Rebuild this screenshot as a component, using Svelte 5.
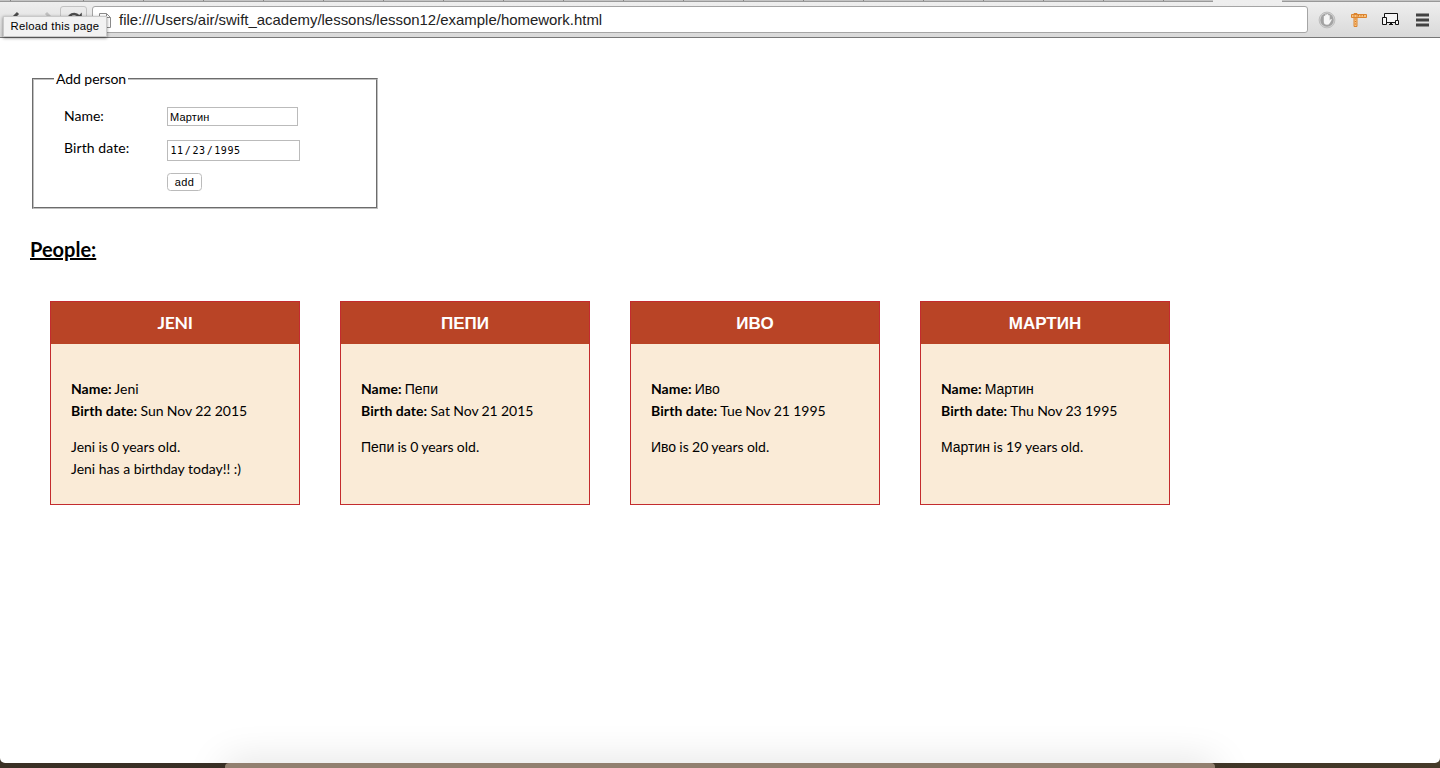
<script>
  const people = [
    { name: 'Jeni', latin: true, date: 'Sun Nov 22 2015', age: 0, birthday: true },
    { name: 'Пепи', date: 'Sat Nov 21 2015', age: 0 },
    { name: 'Иво', date: 'Tue Nov 21 1995', age: 20 },
    { name: 'Мартин', date: 'Thu Nov 23 1995', age: 19 }
  ];
</script>

<div class="window">
  <header class="toolbar">
    <div class="tabs"><i class="strip"></i><i class="active"></i><i class="rest"></i></div>
    <div class="bar">
      <nav class="nav">
        <svg class="back" width="16" height="16" viewBox="0 0 16 16"><path d="M8 2 2 8l6 6M3 8h12" fill="none" stroke="#4b4b4b" stroke-width="3" /></svg>
        <svg class="fwd" width="16" height="16" viewBox="0 0 16 16"><path d="m8 2 6 6-6 6M1 8h12" fill="none" stroke="#c0c0c0" stroke-width="3" /></svg>
        <span class="reload">
          <svg width="20" height="20" viewBox="0 0 20 20"><path d="M15.3 13.2a6 6 0 1 1-.6-7.1" fill="none" stroke="#4b4b4b" stroke-width="2.6" /><path d="M17.8 2.4v6.6h-6.6z" fill="#4b4b4b" /></svg>
        </span>
      </nav>
      <div class="address">
        <svg class="doc" width="12" height="16" viewBox="0 0 12 16"><path d="M.5 1.5h7l4 4v10H.5zM7.5 1.5v4h4" fill="#fff" stroke="#8b8b8b" /></svg>
        <span>file:///Users/air/swift_academy/lessons/lesson12/example/homework.html</span>
      </div>
      <div class="icons">
        <svg width="18" height="18" viewBox="0 0 18 18"><circle cx="9" cy="9" r="7.9" fill="#d6d6d6" stroke="#bdbdbd" /><circle cx="9" cy="9" r="6.7" fill="#a3a3a3" /><path d="M5.8 9V5.2q.8-.9 1.4 0V3.8q.8-.9 1.5 0v-.4q.8-.8 1.5 0v1q.8-.8 1.5 0v5l.9-1.1q1-.5 1.3.3l-2 3.3q-1 1.9-2.9 1.9-3.2 0-3.2-3.2z" fill="#f7f7f7" /></svg>
        <svg width="18" height="18" viewBox="0 0 18 18"><path d="M1.5 3.5h15v3h-15zM4 2.5h3v13H4z" fill="#f8c280" stroke="#db8430" /><path d="M8.5 4v1.5M11 4v1.5M13.5 4v1.5M5 8h1M5 10.5h1M5 13h1" stroke="#d67a22" /></svg>
        <svg width="18" height="18" viewBox="0 0 18 18"><g fill="#f5f5f5" stroke="#111"><path d="M3.5 2.5h13v9h-13z" /><path d="M1.5 6.5h4v7h-4zM14.5 9.5h3v4h-3z" /></g><path d="M8 13.5h4M9 12.5h2" stroke="#111" /></svg>
        <svg class="menu" width="14" height="14" viewBox="0 0 14 14"><path d="M1 2h13M1 7h13M1 12h13" stroke="#424242" stroke-width="3" /></svg>
      </div>
    </div>
    <div class="tooltip">Reload this page</div>
  </header>

  <main>
    <fieldset>
      <legend>Add person</legend>
      <div class="row"><label for="name">Name:</label><input id="name" value="Мартин" /></div>
      <div class="row second"><span class="label wide">Birth date:</span><div class="date"><span>11</span><span>/</span><span>23</span><span>/</span><span>1995</span></div></div>
      <div class="row third"><span class="label"></span><button>add</button></div>
    </fieldset>
    <h2>People:</h2>
    <section class="cards">
      {#each people as p}
        <article>
          <h3 class:cyr={!p.latin}>{p.name.toUpperCase()}</h3>
          <div class="body">
            <p><b>Name:</b> <span class:cyr={!p.latin}>{p.name}</span><br /><b class="wide">Birth date:</b> {p.date}</p>
            <p><span class:cyr={!p.latin}>{p.name}</span> is {p.age} years old.{#if p.birthday}<br /><span class="birthday">{p.name} has a birthday today!! :)</span>{/if}</p>
          </div>
        </article>
      {/each}
    </section>
  </main>
  <div class="dockglow"></div>
</div>
<div class="dock"></div>

<style>
  :global(body) { margin: 0; background: linear-gradient(90deg, #3a3025, #332b23 50%, #453a29); overflow: hidden; }
  :global(#app) { height: 768px; position: relative; }
  .window { height: 763px; background: #fff; border-radius: 0 0 5px 5px; overflow: hidden; position: relative; font: 14px/22px Lato, sans-serif; color: #000; }
  .toolbar { height: 38px; box-sizing: border-box; border-bottom: 1px solid #777; background: linear-gradient(#f0f0f0, #d9d9d9); position: relative; }
  .tabs { display: flex; height: 2px; }
  .tabs i { height: 2px; box-sizing: border-box; border-bottom: 1px solid #999; background: #c4c4c4; }
  .strip { width: 1213px; background: repeating-linear-gradient(90deg, #c4c4c4 0 59px, #858585 59px 60px) 24px 0 !important; }
  .tabs .active { width: 69px; background: #eee; border: 0; }
  .rest { flex: 1; }
  .bar { display: flex; height: 35px; }
  .nav { width: 92px; display: flex; padding: 4px 0 0 8px; box-sizing: border-box; }
  .back { margin: 5px 0 0 2px; }
  .fwd { margin: 5px 0 0 12px; }
  .reload { width: 27px; height: 25px; border: 1px solid #c2c2c2; border-radius: 3px; margin-left: 6px; box-sizing: border-box; display: flex; justify-content: center; padding-top: 3px; }
  .reload svg { flex: none; }
  .address { width: 1216px; height: 27px; margin-top: 4px; box-sizing: border-box; border: 1px solid #a5a5a5; border-radius: 3px; background: #fff; display: flex; align-items: center; padding-left: 6px; font: 14.95px/25px "Liberation Sans", sans-serif; color: #222; }
  .doc { margin-right: 8px; }
  .icons { display: flex; align-items: center; padding: 1px 0 0 10px; gap: 14px; }
  .icons svg:nth-child(3) { margin-left: -1px; }
  .icons .menu { margin-left: 2px; }
  .tooltip { position: absolute; left: 3px; top: 16px; width: 104px; height: 21px; box-sizing: border-box; border: 1px solid #c9c9c9; background: #f2f2f2; box-shadow: 0 1px 3px #0007; font: 11.3px/18px "Liberation Sans", sans-serif; letter-spacing: .25px; text-align: center; white-space: nowrap; }
  main { padding: 30px 30px 0; }
  fieldset { width: 346px; height: 141px; box-sizing: border-box; margin: 0 2px; border: 2px groove #c0c0c0; padding: 15px 20px 0; }
  legend { padding: 0 2px; letter-spacing: -.06px; }
  .row { display: flex; padding-left: 10px; height: 22px; }
  .row label, .label { width: 103px; }
  .wide { letter-spacing: .1px; }
  .second { margin-top: 10px; }
  .third { margin-top: 12px; }
  input { width: 131px; height: 19px; box-sizing: border-box; margin: 2px 0 0; border: 1px solid #bbb; padding: 1px 2px; font: 11px "Liberation Sans", sans-serif; letter-spacing: .15px; color: #000; }
  .date { width: 133px; height: 21px; box-sizing: border-box; margin-top: 3px; border: 1px solid #bbb; padding-left: 2px; font: 10px/19px "DejaVu Sans Mono", monospace; letter-spacing: .6px; display: flex; flex: none; }
  .date span { padding: 0 .5px; }
  button { width: 35px; height: 18px; margin: 2px 0 0; padding: 0; border: 1px solid #bbb; border-radius: 3.5px; background: #fff; font: 11px/15px "Liberation Sans", sans-serif; letter-spacing: .3px; color: #000; }
  h2 { font-size: 20px; line-height: 30px; margin: 25px 0 0; text-decoration: underline; }
  .cards { display: flex; gap: 40px; padding: 37px 20px 0; }
  article { width: 250px; height: 204px; box-sizing: border-box; border: 1px solid #c32b2e; background: #faebd7; }
  h3 { margin: 0; height: 42px; background: #b94426; color: #fff; text-align: center; font-size: 17.5px; line-height: 42px; letter-spacing: -.3px; }
  h3.cyr { font-size: 17px; line-height: 44px; letter-spacing: 0; }
  .body { padding: 34px 20px 0; white-space: nowrap; word-spacing: -.35px; }
  .birthday { word-spacing: 0; }
  p { margin: 0 0 14px; }
  .cyr { font-family: "Liberation Sans", sans-serif; }
  .dockglow { position: absolute; left: 225px; top: 763px; width: 990px; height: 30px; box-shadow: 0 0 40px #0002; }
  .dock { position: absolute; left: 225px; top: 763px; width: 990px; height: 5px; border-radius: 4px 4px 0 0; background: #928070; }
</style>
